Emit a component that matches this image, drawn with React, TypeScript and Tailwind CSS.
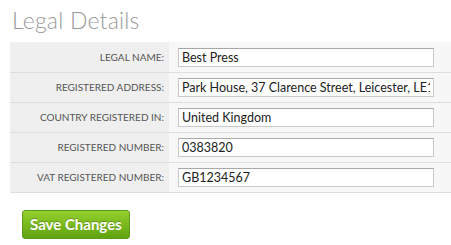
import React from "react";

const fields = [
  { label: "Legal Name:", value: "Best Press" },
  { label: "Registered Address:", value: "Park House, 37 Clarence Street, Leicester, LE1 3RW" },
  { label: "Country Registered In:", value: "United Kingdom" },
  { label: "Registered Number:", value: "0383820" },
  { label: "VAT Registered Number:", value: "GB1234567" },
];

export default function App() {
  return (
    <div className="w-[451px] h-[245px] bg-white font-['Lato',sans-serif] overflow-hidden">
      <h1 className="pl-[12px] pt-[5px] h-[42px] text-[23px] leading-[30px] font-light text-[#999] tracking-[0.2px]">
        Legal Details
      </h1>

      <div className="ml-[10px] border-b border-[#dedede]">
        {fields.map((f, i) => (
          <div key={f.label} className={`flex h-[30px] ${i > 0 ? "border-t border-[#dedede]" : ""}`}>
            <div className="w-[159px] bg-[#efefef] flex items-center justify-end pr-[5px] text-[10px] uppercase text-[#555]">
              {f.label}
            </div>
            <div className="flex-1 bg-[#f7f7f7] flex items-center pl-[9px]">
              <input
                readOnly
                value={f.value}
                className="w-[256px] h-[19px] bg-white border border-[#c9c9c9] border-t-[#a8a8a8] px-[3px] text-[12.5px] text-[#222] font-['Lato',sans-serif] outline-none"
              />
            </div>
          </div>
        ))}
      </div>

      <div className="pl-[22px] pt-[17px]">
        <button className="h-[29px] px-[7px] rounded-[3px] border border-[#5d9a17] bg-gradient-to-b from-[#95d12c] to-[#5fa30f] text-white text-[15px] font-bold [text-shadow:0_-1px_0_rgba(0,0,0,0.25)]">
          Save Changes
        </button>
      </div>
    </div>
  );
}
